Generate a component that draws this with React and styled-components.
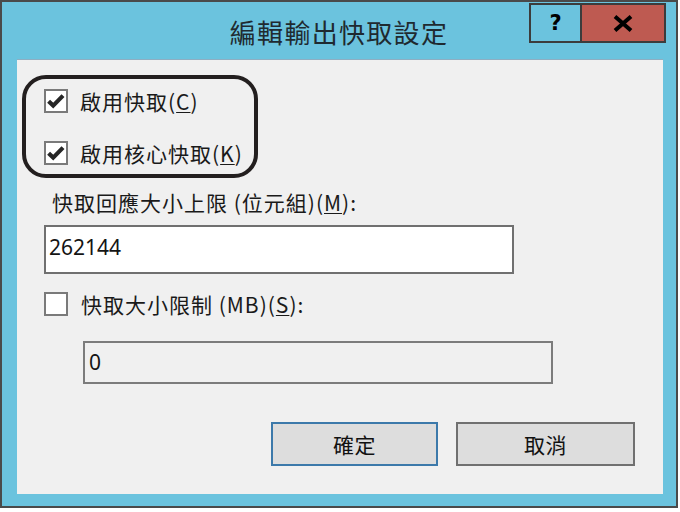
import React from "react";
import styled, { createGlobalStyle } from "styled-components";

const Global = createGlobalStyle`
  html, body { margin: 0; padding: 0; background: #ffffff; }
  body { font-family: "Noto Sans CJK TC", "Noto Sans", sans-serif; }
  * { box-sizing: border-box; }
`;

const Window = styled.div`
  width: 678px;
  height: 508px;
  border: 2px solid #4a4a4a;
  background: #6bc3de;
  display: flex;
  flex-direction: column;
`;

const TitleBar = styled.div`
  height: 57px;
  display: grid;
  grid-template-columns: 1fr auto 1fr;
  flex-shrink: 0;
`;

const Title = styled.div`
  grid-column: 2;
  align-self: center;
  font-size: 26px;
  letter-spacing: 1.3px;
  color: #1f2a30;
  line-height: 30px;
  margin-top: 2px;
`;

const Controls = styled.div`
  grid-column: 3;
  justify-self: end;
  align-self: start;
  display: flex;
  margin-top: 1px;
  margin-right: 10px;
`;

const CtrlButton = styled.div`
  height: 40px;
  width: ${(p) => p.$w}px;
  border: 2px solid #3c3c3c;
  border-right: ${(p) => (p.$joined ? "none" : "2px solid #3c3c3c")};
  background: ${(p) => p.$bg};
  display: flex;
  align-items: center;
  justify-content: center;
  color: #000;
  font-family: "DejaVu Sans", sans-serif;
  font-weight: bold;
  font-size: 21px;
`;

const Client = styled.div`
  flex: 1;
  margin: 0 13px 12px 15px;
  background: #f0f0f0;
  border-top: 1px solid #8eaec2;
  display: flex;
  flex-direction: column;
  align-items: flex-start;
`;

const AnnotBox = styled.div`
  margin: 15px 0 0 5px;
  width: 236px;
  height: 103px;
  border: 4px solid #231f1f;
  border-radius: 24px;
  padding: 10px 0 0 18px;
  display: flex;
  flex-direction: column;
  gap: 28px;
`;

const CheckRow = styled.label`
  display: flex;
  align-items: center;
  gap: ${(p) => p.$gap || 12}px;
  height: 24px;
  margin: ${(p) => p.$margin || "0"};
`;

const Box = styled.span`
  width: 24px;
  height: 24px;
  flex-shrink: 0;
  border: 2px solid #7a7a7a;
  background: #ffffff;
  display: flex;
  align-items: center;
  justify-content: center;
`;

const Text = styled.span`
  font-size: 21px;
  line-height: 24px;
  color: #1a1a1a;
  letter-spacing: 1px;
  white-space: nowrap;
`;

const U = styled.u`
  text-decoration-thickness: 1px;
  text-underline-offset: 2px;
`;

const FieldLabel = styled(Text)`
  display: block;
  margin: 12px 0 0 35px;
`;

const Input = styled.div`
  width: 470px;
  height: ${(p) => p.$h}px;
  margin: ${(p) => p.$margin};
  border: 2px solid ${(p) => (p.$disabled ? "#7c7c7c" : "#707070")};
  background: ${(p) => (p.$disabled ? "#f0f0f0" : "#ffffff")};
  display: flex;
  align-items: center;
  padding: 0 0 ${(p) => p.$pb || 0}px ${(p) => p.$pad}px;
  font-family: "Noto Sans", "Noto Sans CJK TC", sans-serif;
  font-size: 21px;
  color: #141414;
`;

const ButtonRow = styled.div`
  display: flex;
  gap: 18px;
  margin: 38px 0 0 254px;
`;

const Button = styled.div`
  width: ${(p) => p.$w}px;
  height: 44px;
  border: 2px solid ${(p) => (p.$primary ? "#3c79aa" : "#707070")};
  background: #dddddd;
  display: flex;
  align-items: center;
  justify-content: center;
  font-size: 21px;
  color: #111;
  letter-spacing: 0.5px;
`;

const Check = () => (
  <svg width="20" height="20" viewBox="0 0 20 20">
    <path d="M2.6 10.2 L7.2 14.6 L17 4.6" fill="none" stroke="#262626" strokeWidth="4.2" strokeLinejoin="miter" />
  </svg>
);

const CloseX = () => (
  <svg width="22" height="17" viewBox="0 0 22 17">
    <path d="M3 1.5 L19 15.5 M19 1.5 L3 15.5" stroke="#000" strokeWidth="4" />
  </svg>
);

export default function App() {
  return (
    <>
      <Global />
      <Window>
        <TitleBar>
          <Title>編輯輸出快取設定</Title>
          <Controls>
            <CtrlButton $w={51} $bg="#6bc3de" $joined>?</CtrlButton>
            <CtrlButton $w={86} $bg="#be5a51"><CloseX /></CtrlButton>
          </Controls>
        </TitleBar>
        <Client>
          <AnnotBox>
            <CheckRow>
              <Box><Check /></Box>
              <Text>啟用快取(<U>C</U>)</Text>
            </CheckRow>
            <CheckRow>
              <Box><Check /></Box>
              <Text>啟用核心快取(<U>K</U>)</Text>
            </CheckRow>
          </AnnotBox>
          <FieldLabel>快取回應大小上限 (位元組)(<U>M</U>):</FieldLabel>
          <Input $h={49} $margin="11px 0 0 27px" $pad={3} $pb={5}>262144</Input>
          <CheckRow $gap={13} $margin="18px 0 0 27px">
            <Box />
            <Text>快取大小限制 (MB)(<U>S</U>):</Text>
          </CheckRow>
          <Input $h={43} $margin="25px 0 0 66px" $pad={4} $pb={2} $disabled>0</Input>
          <ButtonRow>
            <Button $w={167} $primary>確定</Button>
            <Button $w={179}>取消</Button>
          </ButtonRow>
        </Client>
      </Window>
    </>
  );
}
